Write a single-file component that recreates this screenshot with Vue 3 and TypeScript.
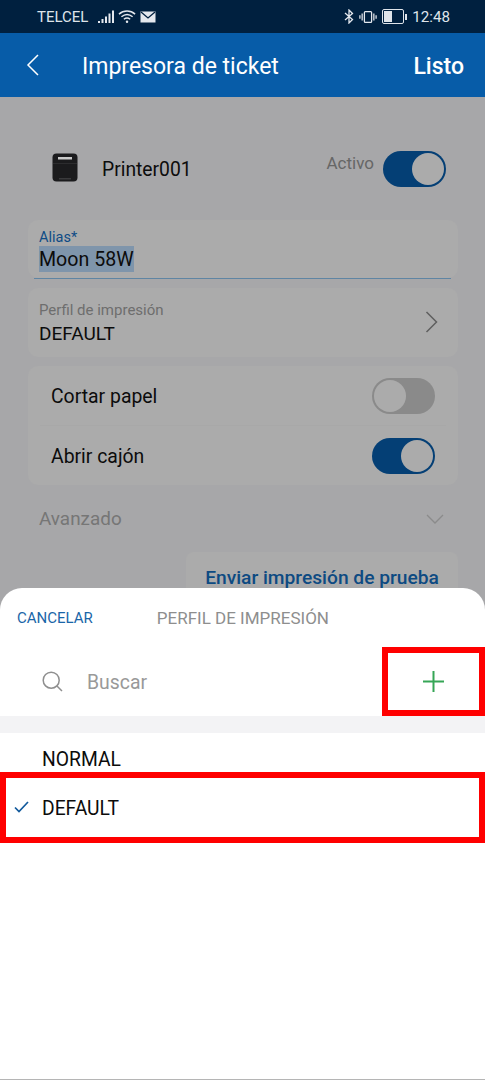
<template>
  <div class="screen">
    <div class="status-bar">
      <div class="status-left">
        <span>TELCEL</span>
        <svg class="sig" width="17" height="14" viewBox="0 0 17 14">
          <rect x="0" y="11" width="2" height="2" fill="#e4e8ee" />
          <rect x="3.5" y="9" width="2" height="4" fill="#e4e8ee" />
          <rect x="7" y="6.5" width="2" height="6.5" fill="#e4e8ee" />
          <rect x="10.5" y="3.5" width="2" height="9.5" fill="#e4e8ee" />
          <rect x="14" y="0.5" width="2" height="12.5" fill="#e4e8ee" />
        </svg>
        <svg class="wifi" width="19" height="15" viewBox="0 0 20 15" fill="none" stroke="#e4e8ee" stroke-width="1.5">
          <path d="M1 5 C6 0.6 13 0.6 18 5" />
          <path d="M3.6 7.8 C7.2 4.8 11.8 4.8 15.4 7.8" />
          <path d="M6.2 10.4 C8.2 8.8 10.8 8.8 12.8 10.4" />
          <circle cx="9.5" cy="13" r="1.3" fill="#e4e8ee" stroke="none" />
        </svg>
        <svg width="16" height="12" viewBox="0 0 15 12">
          <rect x="0" y="0.5" width="15" height="11" fill="#e4e8ee" />
          <path d="M0.5 1 L7.5 7 L14.5 1" fill="none" stroke="#00203f" stroke-width="1.3" />
        </svg>
      </div>
      <div class="status-right">
        <svg width="10" height="15" viewBox="0 0 10 15" fill="none" stroke="#e4e8ee" stroke-width="1.3">
          <path d="M1 4 L8.5 10.5 L5 14 V1 L8.5 4.5 L1 11" />
        </svg>
        <svg class="vib" width="18" height="14" viewBox="0 0 20 14" fill="none" stroke="#e4e8ee" stroke-width="1.4">
          <rect x="6" y="1" width="8" height="12" rx="1" />
          <path d="M3.5 3 V11 M1 5 V9 M16.5 3 V11 M19 5 V9" />
        </svg>
        <span class="battery"><span class="battery-fill"></span></span>
        <span class="battery-tip"></span>
        <span class="clock">12:48</span>
      </div>
    </div>

    <header class="app-header">
      <svg class="back" width="14" height="22" viewBox="0 0 14 22" fill="none" stroke="#fff" stroke-width="1.5">
        <path d="M12 1 L2 11 L12 21" />
      </svg>
      <h1>Impresora de ticket</h1>
      <span class="done">Listo</span>
    </header>

    <main class="form">
      <div class="printer-row">
        <svg class="printer" width="26" height="30" viewBox="0 0 26 30">
          <rect x="0.5" y="0.5" width="25" height="28" rx="4" fill="#1b1b1d" />
          <rect x="6" y="4" width="14" height="2.5" fill="#c9c9c9" />
          <rect x="1" y="10" width="24" height="1" fill="#2c2c2e" />
          <rect x="7" y="25" width="12" height="1.5" fill="#3a3a3c" />
        </svg>
        <span class="printer-name">Printer001</span>
        <span class="active-label">Activo</span>
        <span class="switch on"><span class="knob"></span></span>
      </div>

      <div class="card alias">
        <label>Alias*</label>
        <div class="alias-value"><span class="selected">Moon 58W</span></div>
      </div>

      <div class="card profile">
        <div>
          <div class="profile-label">Perfil de impresión</div>
          <div class="profile-value">DEFAULT</div>
        </div>
        <svg width="13" height="22" viewBox="0 0 13 22" fill="none" stroke="#5f5f5f" stroke-width="1.5">
          <path d="M1.5 1 L11.5 11 L1.5 21" />
        </svg>
      </div>

      <div class="card options">
        <div class="option">
          <span class="option-label">Cortar papel</span>
          <span class="switch"><span class="knob"></span></span>
        </div>
        <div class="option">
          <span class="option-label">Abrir cajón</span>
          <span class="switch on"><span class="knob"></span></span>
        </div>
      </div>

      <div class="advanced">
        <span>Avanzado</span>
        <svg width="18" height="10" viewBox="0 0 18 10" fill="none" stroke="#8b8b8b" stroke-width="1.3">
          <path d="M1 1 L9 9 L17 1" />
        </svg>
      </div>

      <button class="test-print">Enviar impresión de prueba</button>
    </main>

    <section class="sheet">
      <div class="sheet-head">
        <span class="cancel">CANCELAR</span>
        <span class="sheet-title">PERFIL DE IMPRESIÓN</span>
      </div>
      <div class="search-row">
        <svg width="21" height="21" viewBox="0 0 21 21" fill="none" stroke="#8f8f8f" stroke-width="1.5">
          <circle cx="9.2" cy="9.2" r="8" />
          <path d="M15 15 L20 20" />
        </svg>
        <span class="search-text">Buscar</span>
        <svg class="plus" width="21" height="21" viewBox="0 0 21 21" stroke="#36a656" stroke-width="2">
          <path d="M10.5 0 V21 M0 10.5 H21" />
        </svg>
      </div>
      <div class="band"></div>
      <ul class="profiles">
        <li v-for="p in profiles" :key="p.name">
          <svg v-if="p.selected" class="check" width="15" height="12" viewBox="0 0 15 12" fill="none" stroke="#125a9c" stroke-width="1.7">
            <path d="M1 6.5 L5 10.5 L14 1" />
          </svg>
          {{ p.name }}
        </li>
      </ul>
    </section>

    <div class="mark mark-add"></div>
    <div class="mark mark-default"></div>
  </div>
</template>

<script setup lang="ts">
interface Profile {
  name: string
  selected: boolean
}

const profiles: Profile[] = [
  { name: 'NORMAL', selected: false },
  { name: 'DEFAULT', selected: true },
]
</script>

<style>
html,
body {
  margin: 0;
  background: #fff;
}
</style>

<style scoped>
.screen {
  position: relative;
  width: 485px;
  height: 1080px;
  overflow: hidden;
  background: #a7a7a9;
  font-family: Roboto, "Liberation Sans", sans-serif;
  color: #0c0c0c;
}

.status-bar {
  height: 33px;
  box-sizing: border-box;
  padding: 0 35px 0 37px;
  background: #00203f;
  color: #dfe4ea;
  font-size: 15px;
  display: flex;
  align-items: center;
  justify-content: space-between;
}

.status-left,
.status-right {
  display: flex;
  align-items: center;
}

.sig {
  margin-left: 10px;
}

.wifi {
  margin-left: 3px;
  margin-right: 3px;
}

.vib {
  margin-left: 5px;
}

.battery {
  width: 18px;
  height: 11px;
  margin-left: 5px;
  border: 1.5px solid #dfe4ea;
  border-radius: 2px;
  padding: 1px;
  box-sizing: content-box;
  display: block;
}

.battery-fill {
  display: block;
  width: 8px;
  height: 100%;
  background: #dfe4ea;
}

.battery-tip {
  width: 2px;
  height: 6px;
  margin-left: 1px;
  background: #dfe4ea;
}

.clock {
  margin-left: 5px;
  font-size: 15.2px;
}

.app-header {
  height: 64px;
  box-sizing: border-box;
  padding: 2px 21px 0 26px;
  background: #075ca8;
  color: #fff;
  display: flex;
  align-items: center;
}

.back {
  margin-top: -2px;
}

.app-header h1 {
  margin: 0 0 0 42px;
  font-size: 23px;
  font-weight: 400;
  flex: 1;
}

.done {
  font-size: 23px;
  font-weight: 500;
}

.form {
  padding: 0 27px 0 28px;
  display: flex;
  flex-direction: column;
}

.printer-row {
  height: 123px;
  box-sizing: border-box;
  padding: 21px 12px 0 24px;
  display: flex;
  align-items: center;
}

.printer {
  margin-top: -2px;
}

.printer-name {
  margin-left: 24px;
  font-size: 19.3px;
  flex: 1;
}

.active-label {
  margin: -13px 9px 0 0;
  font-size: 17px;
  color: #666;
}

.switch {
  display: block;
  width: 63px;
  height: 36px;
  box-sizing: border-box;
  padding: 2px;
  border-radius: 18px;
  background: #8a8a8a;
  flex: none;
}

.switch .knob {
  display: block;
  width: 32px;
  height: 32px;
  border-radius: 50%;
  background: #ababab;
}

.switch.on {
  background: #043f75;
  display: flex;
  justify-content: flex-end;
}

.card {
  background: #ababab;
  border-radius: 10px;
}

.alias {
  position: relative;
  height: 58px;
  box-sizing: border-box;
  padding: 10px 11px 0;
}

.alias::after {
  content: "";
  position: absolute;
  left: 6px;
  right: 7px;
  bottom: -1px;
  height: 1px;
  background: #5f85a3;
}

.alias label {
  display: block;
  font-size: 14.5px;
  line-height: 16px;
  color: #0f4c86;
}

.alias-value {
  font-size: 19.6px;
}

.selected {
  display: inline-block;
  height: 26px;
  padding-top: 2px;
  box-sizing: border-box;
  line-height: 24px;
  background: #7f95ab;
}

.profile {
  height: 69px;
  margin-top: 10px;
  box-sizing: border-box;
  padding: 2px 20px 0 11px;
  display: flex;
  justify-content: space-between;
  align-items: center;
}

.profile svg {
  margin-top: -3px;
}

.profile-label {
  font-size: 15px;
  line-height: 18px;
  color: #6e6e6e;
}

.profile-value {
  font-size: 19px;
  line-height: 24px;
  margin-top: 3px;
}

.options {
  margin-top: 9px;
  height: 119px;
  display: flex;
  flex-direction: column;
}

.option {
  flex: 1;
  padding: 0 23px;
  font-size: 19.4px;
  display: flex;
  align-items: center;
  justify-content: space-between;
}

.option-label {
  margin-top: 2px;
}

.option + .option {
  border-top: 1px solid #a8a8a8;
  margin: 0 12px;
  padding: 0 11px;
}

.advanced {
  margin-top: 14px;
  height: 38px;
  padding: 0 14px 0 11px;
  color: #767676;
  font-size: 18.9px;
  display: flex;
  align-items: center;
  justify-content: space-between;
}

.advanced svg {
  margin-top: 1px;
}

.test-print {
  align-self: flex-end;
  width: 272px;
  height: 56px;
  margin-top: 15px;
  padding: 0 0 6px;
  border: 0;
  border-radius: 8px;
  background: #ababab;
  color: #0d4a82;
  font-family: inherit;
  font-size: 19.2px;
  font-weight: 500;
}

.sheet {
  position: absolute;
  left: 0;
  right: 0;
  top: 588px;
  bottom: 0;
  background: #fff;
  border-radius: 22px 22px 0 0;
  border-bottom: 1px solid #b5b5b5;
}

.sheet-head {
  height: 59px;
  box-sizing: border-box;
  padding: 0 0 0 17px;
  display: flex;
  align-items: center;
}

.cancel {
  font-size: 15px;
  color: #1a66a8;
}

.sheet-title {
  margin: 1px 0 0 64px;
  font-size: 17px;
  color: #8e8e8e;
}

.search-row {
  height: 69px;
  padding: 0 41px 0 42px;
  display: flex;
  align-items: center;
}

.search-text {
  margin: 1px 0 0 24px;
  font-size: 19.4px;
  color: #999;
  flex: 1;
}

.band {
  height: 17px;
  background: #f3f3f5;
}

.profiles {
  list-style: none;
  margin: 0;
  padding: 2px 0 0;
}

.profiles li {
  position: relative;
  height: 49px;
  padding-left: 42px;
  line-height: 49px;
  font-size: 19.3px;
}

.check {
  position: absolute;
  left: 14px;
  top: 17px;
}

.mark {
  position: absolute;
  box-sizing: border-box;
  border: 6px solid #f00;
}

.mark-add {
  left: 382px;
  top: 647px;
  width: 103px;
  height: 69px;
}

.mark-default {
  left: 0;
  top: 772px;
  width: 485px;
  height: 71px;
}
</style>
